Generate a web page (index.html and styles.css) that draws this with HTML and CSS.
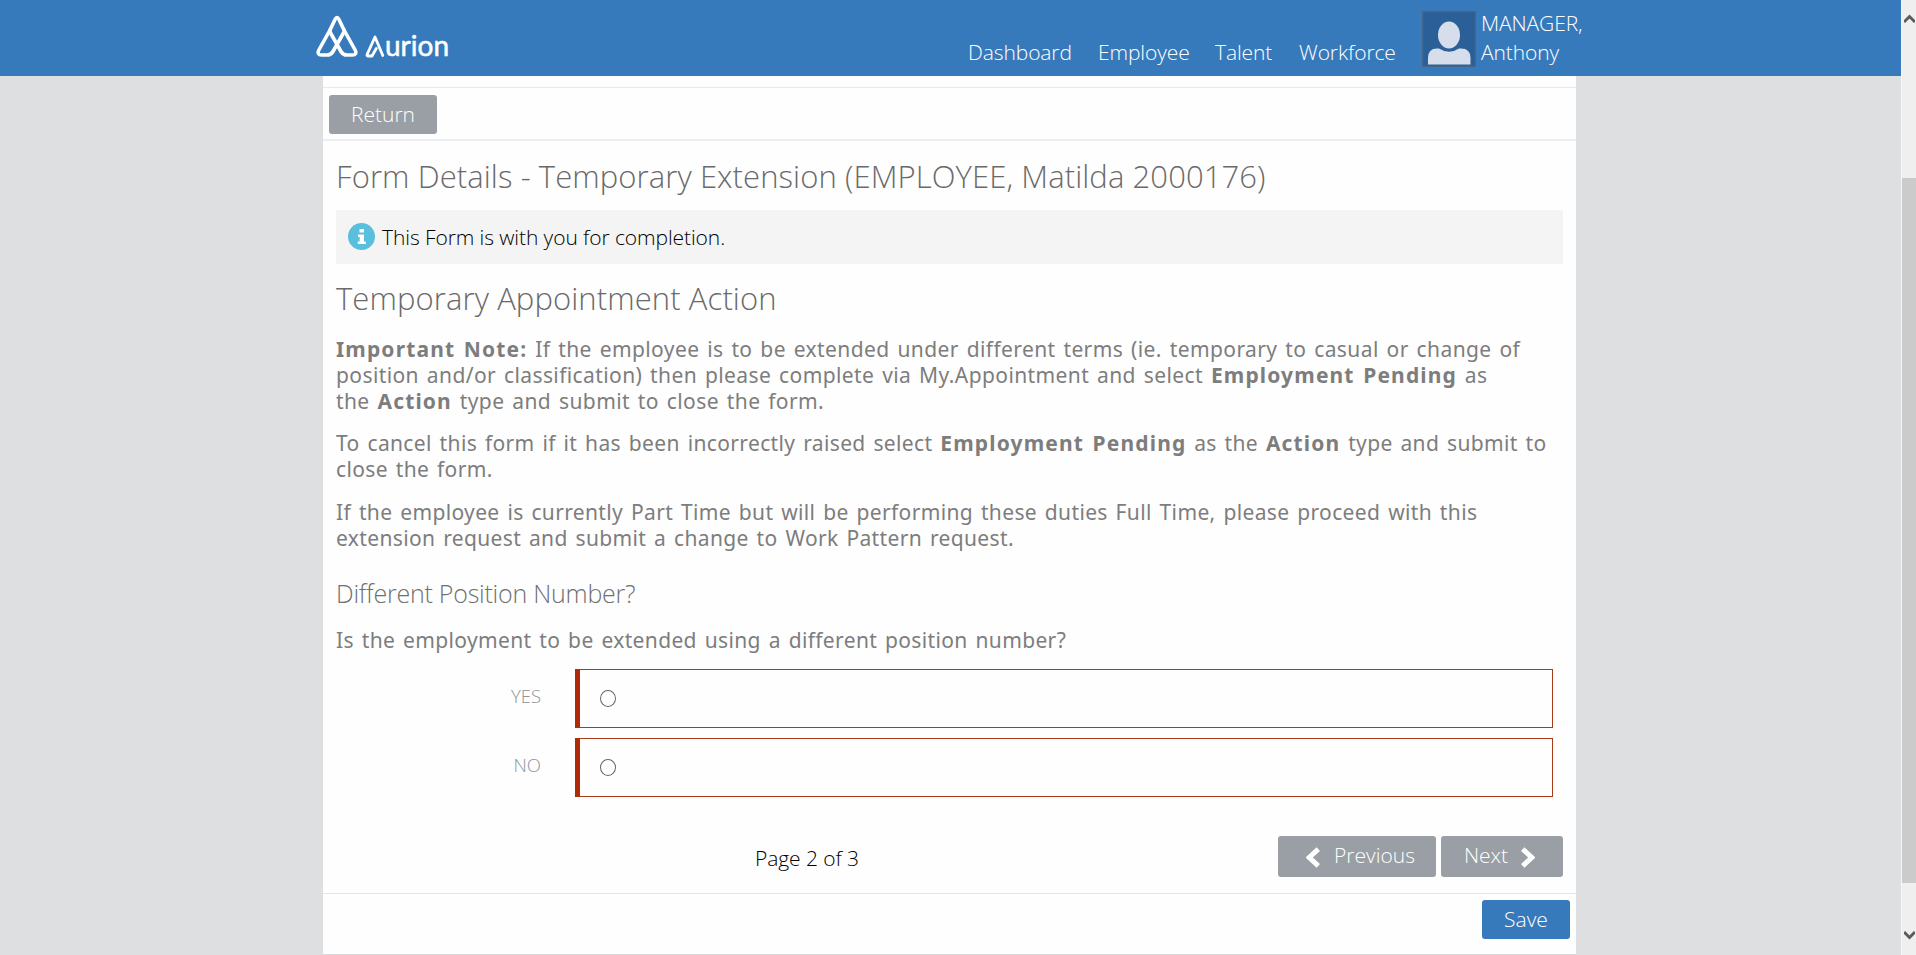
FILE: index.html
```html
<!DOCTYPE html>
<html lang="en">
<head>
<meta charset="utf-8">
<title>Aurion - Form Details</title>
<link rel="stylesheet" href="styles.css">
</head>
<body>
<div class="page">
  <header class="header">
    <div class="brand">
      <svg class="brand-mark" viewBox="0 0 42 43" width="42" height="43">
        <g fill="none" stroke="#fff" stroke-width="3.6" stroke-linejoin="round" stroke-linecap="round">
          <path d="M14 15 L2.6 35.5 Q1 40 5.5 40 H11 Q15 40 17 36.500 L28 17"/>
          <path d="M28 15 L39.400 35.500 Q41 40 36.500 40 H31 Q27 40 25 36.500 L14 17"/>
          <path d="M14 15 L19 4.500 Q21 0.500 23 4.500 L28 15"/>
        </g>
      </svg>
      <svg class="brand-a" viewBox="0 0 20 24" width="20" height="24">
        <path d="M7 22 H3 Q1.500 22 2.300 20 L10 3 L17.800 21.500 M7 22 L11.300 14.500" fill="none" stroke="#fff" stroke-width="2.800" stroke-linejoin="round" stroke-linecap="round"/>
      </svg>
      <span class="brand-name">urion</span>
    </div>
    <nav class="nav">
      <a class="nav-item dash">Dashboard</a>
      <a class="nav-item empl">Employee</a>
      <a class="nav-item tal">Talent</a>
      <a class="nav-item work">Workforce</a>
    </nav>
    <div class="user">
      <svg class="avatar" viewBox="0 0 54 56" width="54" height="56">
        <rect x=".75" y=".75" width="52.500" height="54.500" fill="#2a6097" stroke="#41658d" stroke-width="1.500"/>
        <ellipse cx="27" cy="24" rx="11" ry="13.500" fill="#d5deea"/>
        <path d="M6 53.500 V47 Q6 37.500 15 37.500 H17 Q27 44 37 37.500 H39 Q48.500 37.500 48.500 47 V53.500 Z" fill="#d5deea"/>
      </svg>
      <div class="user-name"><span class="last">MANAGER,</span><span class="first">Anthony</span></div>
    </div>
  </header>
  <main class="panel">
    <div class="toolbar"><button class="btn btn-return">Return</button></div>
    <section class="content">
      <h1 class="title">Form Details - Temporary Extension (EMPLOYEE, Matilda 2000176)</h1>
      <div class="info">
        <svg width="27" height="27" viewBox="0 0 27 27"><circle cx="13.500" cy="13.500" r="13.500" fill="#59bfdc"/><path d="M11.500 6h4.500v3.500h-4.500z M10 11.500h6v7h1.800v2.500H9.800v-2.500h1.900V14H10z" fill="#fff"/></svg>
        <span>This Form is with you for completion.</span>
      </div>
      <h2 class="subtitle">Temporary Appointment Action</h2>
      <div class="prose">
        <p class="important-note"><span class="line"><b>Important Note:</b> If the employee is to be extended under different terms (ie. temporary to casual or change of</span>
        <span class="line">position and/or classification) then please complete via My.Appointment and select <b>Employment Pending</b> as</span>
        <span class="line">the <b>Action</b> type and submit to close the form.</span></p>
        <p class="cancel-note"><span class="line">To cancel this form if it has been incorrectly raised select <b>Employment Pending</b> as the <b>Action</b> type and submit to</span>
        <span class="line">close the form.</span></p>
        <p><span class="line">If the employee is currently Part Time but will be performing these duties Full Time, please proceed with this</span>
        <span class="line">extension request and submit a change to Work Pattern request.</span></p>
      </div>
      <h3 class="section-title">Different Position Number?</h3>
      <div class="prose question"><span class="line">Is the employment to be extended using a different position number?</span></div>
      <div class="options">
        <div class="option"><span class="option-label">YES</span><div class="option-box"><span class="radio"></span></div></div>
        <div class="option"><span class="option-label">NO</span><div class="option-box"><span class="radio"></span></div></div>
      </div>
      <div class="pager">
        <span class="page-count">Page 2 of 3</span>
        <div class="pager-buttons">
          <button class="btn btn-prev"><svg width="14" height="21" viewBox="0 0 14 21"><path d="M12.300 2.200 L3.200 10.500 L12.300 18.800" fill="none" stroke="#fff" stroke-width="5"/></svg><span class="btn-text">Previous</span></button>
          <button class="btn btn-next"><span class="btn-text">Next</span><svg width="14" height="21" viewBox="0 0 14 21"><path d="M1.700 2.200 L10.800 10.500 L1.700 18.800" fill="none" stroke="#fff" stroke-width="5"/></svg></button>
        </div>
      </div>
    </section>
    <footer class="footer"><button class="btn btn-save">Save</button></footer>
  </main>
</div>
<aside class="scrollbar">
  <svg class="arrow up" width="11" height="10" viewBox="0 0 11 10"><path d="M0 8 L5.500 2.500 L11 8" fill="none" stroke="#5b5b5b" stroke-width="3"/></svg>
  <div class="thumb"></div>
  <svg class="arrow down" width="11" height="10" viewBox="0 0 11 10"><path d="M0 2 L5.500 7.500 L11 2" fill="none" stroke="#5b5b5b" stroke-width="3"/></svg>
</aside>
</body>
</html>
```
FILE: styles.css
```css
* { box-sizing: border-box; }
body { margin: 0; height: 955px; display: flex; overflow: hidden; background: #dedfe1; font-family: "Open Sans", sans-serif; font-weight: 300; font-size: 21px; }
h1, h2, h3, p { margin: 0; font-weight: 300; white-space: nowrap; }
.page { flex: 1; display: flex; flex-direction: column; }
.header { height: 76px; background: #377abc; color: #fff; display: flex; padding-left: 316px; white-space: nowrap; }
.brand { display: flex; width: 652px; padding-top: 15px; }
.brand-mark { margin-right: 7px; }
.brand-a { margin-top: 19px; }
.brand-name { font-family: "Lato", sans-serif; font-weight: 400; font-size: 28px; line-height: 36px; margin: 12px 0 0 0; letter-spacing: 0; -webkit-text-stroke: .5px #fff; }
.nav { display: flex; padding-top: 38px; width: 454px; line-height: 28px; letter-spacing: -.1px; }
.dash { width: 130px; }
.empl { width: 117px; }
.tal { width: 84px; }
.user { display: flex; padding-top: 11px; }
.user-name { display: flex; flex-direction: column; line-height: 29px; margin: -2px 0 0 5px; letter-spacing: -.1px; }
.panel { width: 1253px; margin-left: 323px; flex: 1; background: #fefefe; border-bottom: 1px solid #d8d9da; padding-top: 11px; }
.toolbar { height: 54px; border-top: 1px solid #e8e9ea; border-bottom: 2px solid #edeeef; padding: 7px 6px; }
.btn { display: flex; align-items: center; justify-content: center; border: 0; border-radius: 3px; padding: 0 0 1px; background: #999fa4; color: #fff; font: 300 21px "Open Sans", sans-serif; }
.btn-return { width: 108px; height: 39px; }
.content { height: 752px; padding: 0 13px; }
.title { font-size: 31px; line-height: 42px; padding-top: 14px; height: 69px; color: #6a6a6a; letter-spacing: .09px; }
.info { height: 54px; background: #f4f4f4; display: flex; align-items: center; padding-left: 12px; gap: 7px; color: #000; letter-spacing: -.09px; }
.info svg { margin-bottom: 2px; }
.subtitle { font-size: 31px; line-height: 42px; margin-top: 13px; height: 59px; color: #6a6a6a; letter-spacing: .1px; }
.prose { font-family: "Noto Sans", sans-serif; font-weight: 400; font-size: 21px; line-height: 26px; color: #7d7d7d; white-space: nowrap; letter-spacing: .36px; word-spacing: 2px; }
.prose p { margin-bottom: 16px; font-weight: 400; }
.prose .important-note { letter-spacing: .4px; }
.prose .cancel-note { margin-bottom: 17px; }
.prose b { font-weight: 700; letter-spacing: 1.15px; }
.line { display: block; width: max-content; }
.section-title { font-size: 25px; line-height: 34px; color: #707070; margin-top: 25px; letter-spacing: -.23px; }
.question { margin-top: 17px; }
.options { display: flex; flex-direction: column; gap: 10px; margin-top: 16px; }
.option { display: flex; height: 59px; }
.option-label { width: 205px; margin-right: 34px; text-align: right; font-size: 18.5px; line-height: 54px; color: #8d9399; }
.option-box { width: 978px; border: 1px solid #a83b1c; border-left: 5px solid #b02a08; display: flex; align-items: center; padding-left: 20px; }
.radio { width: 16px; height: 17px; border: 1px solid #666; border-radius: 50%; }
.pager { display: flex; justify-content: space-between; margin-top: 39px; height: 41px; }
.page-count { margin-left: 419px; line-height: 45px; color: #000; letter-spacing: -.08px; }
.pager-buttons { display: flex; gap: 5px; }
.btn-prev { width: 158px; height: 41px; gap: 14px; padding-left: 7px; }
.btn-next { width: 122px; height: 41px; gap: 13px; padding-right: 5px; }
.btn-text { padding-bottom: 2px; }
.pager-buttons svg { margin-top: 2px; }
.footer { border-top: 1px solid #e5e6e7; padding: 6px 6px 0; display: flex; justify-content: flex-end; }
.btn-save { width: 88px; height: 39px; background: #377abc; }
.scrollbar { width: 15px; background: #efefef; border-left: 1px solid #f7f7f7; padding: 14px 0 14px; display: flex; flex-direction: column; }
.arrow { margin-left: 2px; }
.thumb { margin: 154px 0 47px; height: 705px; background: #cbcbcb; }
```
